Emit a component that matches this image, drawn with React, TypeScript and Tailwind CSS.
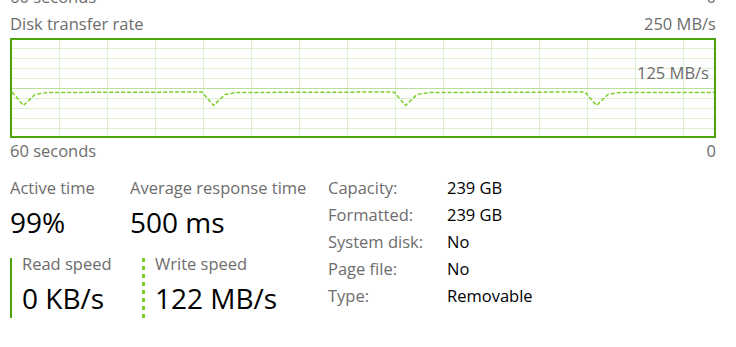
import React from 'react';

const font = { fontFamily: '"Open Sans", "Noto Sans", sans-serif' };

const hLines = [8, 18, 28, 38, 58, 68, 78, 88];
const vLines = Array.from({ length: 14 }, (_, i) => 47 + i * 48);
const dipStarts = [0, 190, 382, 573];

function buildPath() {
  let d = 'M 0 52';
  dipStarts.forEach((s) => {
    d += ` L ${s} 52 L ${s + 11.5} 65.5 L ${s + 23} 54.5 L ${s + 35} 52.5`;
  });
  d += ' L 702 52.5';
  return d;
}

const TransferChart: React.FC = () => (
  <div className="relative w-[706px] h-[100px] border-2 border-[#4da60c] bg-white">
    <svg width="702" height="96" viewBox="0 0 702 96" className="block">
      {hLines.map((y) => (
        <line key={`h${y}`} x1="0" x2="702" y1={y + 0.5} y2={y + 0.5} stroke="#dcefcf" strokeWidth="1" />
      ))}
      {vLines.map((x) => (
        <line key={`v${x}`} x1={x + 0.5} x2={x + 0.5} y1="0" y2="96" stroke="#dcefcf" strokeWidth="1" />
      ))}
      <line x1="0" x2="702" y1="48.5" y2="48.5" stroke="#b9df9c" strokeWidth="1.2" />
      <path d={buildPath()} fill="none" stroke="#7ccf2a" strokeWidth="1.5" strokeDasharray="4 2" />
    </svg>
    <span className="absolute right-[5px] top-[22px] text-[16.5px] leading-[22px] text-[#6d6d6d]">125 MB/s</span>
  </div>
);

const Stat: React.FC<{ label: string; value: string }> = ({ label, value }) => (
  <div className="flex flex-col">
    <span className="text-[16.5px] leading-[22px] text-[#6d6d6d]">{label}</span>
    <span className="mt-[4.6px] text-[28px] leading-[38px] text-black">{value}</span>
  </div>
);

const props: Array<[string, string]> = [
  ['Capacity:', '239 GB'],
  ['Formatted:', '239 GB'],
  ['System disk:', 'No'],
  ['Page file:', 'No'],
  ['Type:', 'Removable'],
];

export default function App() {
  return (
    <div className="w-[736px] h-[347px] overflow-hidden bg-white pl-[10px]" style={font}>
      <div className="w-[706px] -mt-[14.4px] flex justify-between text-[16.5px] leading-[22px] text-[#6d6d6d]">
        <span>60 seconds</span>
        <span>0</span>
      </div>
      <div className="w-[706px] mt-[5px] flex justify-between text-[16.5px] leading-[22px] text-[#6d6d6d]">
        <span>Disk transfer rate</span>
        <span>250 MB/s</span>
      </div>
      <div className="mt-[3.4px]">
        <TransferChart />
      </div>
      <div className="w-[706px] mt-[1.6px] flex justify-between text-[16.5px] leading-[22px] text-[#6d6d6d]">
        <span>60 seconds</span>
        <span>0</span>
      </div>

      <div className="mt-[15px] flex">
        <div className="flex flex-col w-[318px]">
          <div className="flex">
            <div className="w-[120px]">
              <Stat label="Active time" value="99%" />
            </div>
            <Stat label="Average response time" value="500 ms" />
          </div>
          <div className="flex mt-[11.6px]">
            <div className="w-[132px] flex items-start">
              <div className="mt-[5.4px] w-[2px] h-[60px] bg-[#4da60c]" />
              <div className="pl-[10px]">
                <Stat label="Read speed" value="0 KB/s" />
              </div>
            </div>
            <div className="flex items-start">
              <div className="mt-[5.4px] w-[3px] h-[60px] bg-[repeating-linear-gradient(to_bottom,#7ccf2a_0px,#7ccf2a_4px,transparent_4px,transparent_8px)]" />
              <div className="pl-[10px]">
                <Stat label="Write speed" value="122 MB/s" />
              </div>
            </div>
          </div>
        </div>
        <div className="grid grid-cols-[119px_auto] content-start text-[16.5px] leading-[27px] -mt-[2.5px]">
          {props.map(([k, v]) => (
            <React.Fragment key={k}>
              <span className="text-[#6d6d6d]">{k}</span>
              <span className="text-black">{v}</span>
            </React.Fragment>
          ))}
        </div>
      </div>
    </div>
  );
}
